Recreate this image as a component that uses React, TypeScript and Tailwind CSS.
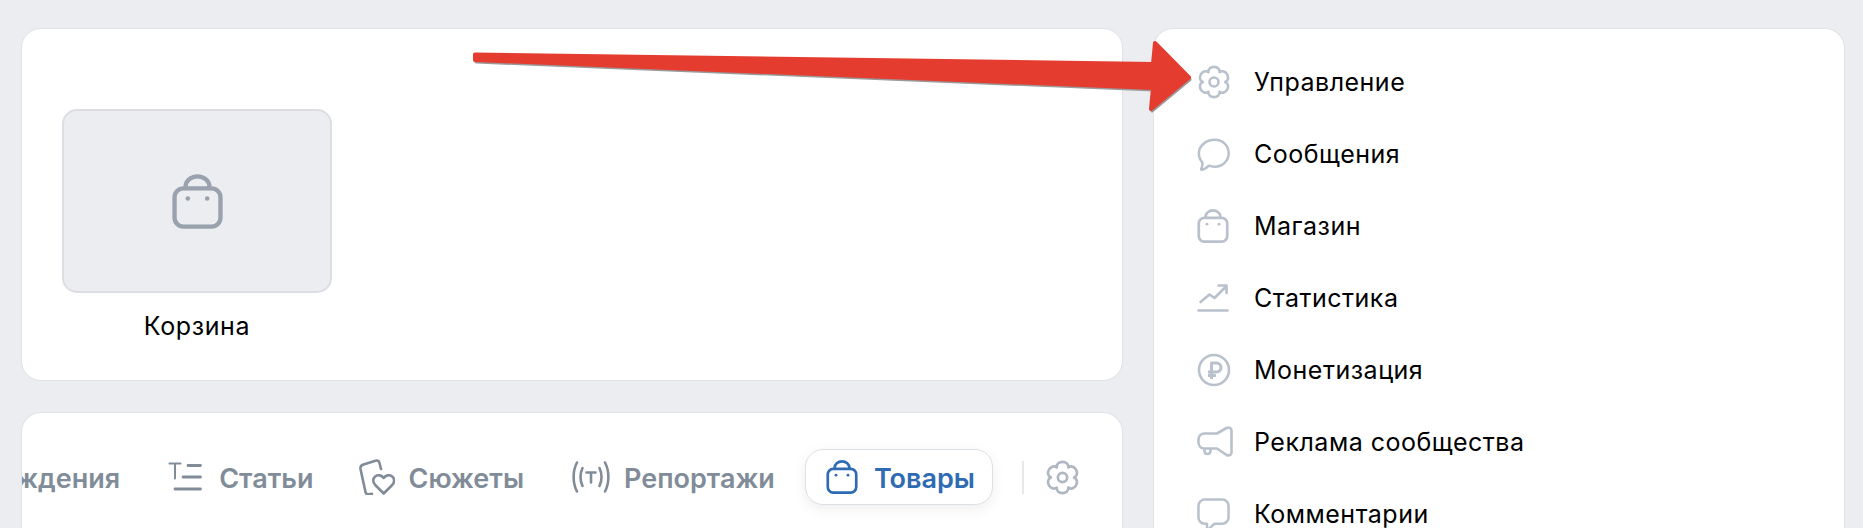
import type { ReactNode } from "react";

function BagIcon({ className }: { className: string }) {
  return (
    <svg className={className} viewBox="0 0 20 21.5" fill="none" stroke="currentColor" strokeWidth="1.7">
      <rect x="1" y="5.6" width="18" height="15" rx="3.5" />
      <path d="M5.300 5.600V5a4.700 4.100 0 0 1 9.400 0v.6" />
      <circle cx="6.200" cy="9.600" r="0.900" fill="currentColor" stroke="none" />
      <circle cx="13.800" cy="9.600" r="0.900" fill="currentColor" stroke="none" />
    </svg>
  );
}

// six rounded lobes around the centre
function gearPath() {
  const polar = (deg: number, r: number) => {
    const rad = (deg * Math.PI) / 180;
    return `${(17 + r * Math.cos(rad)).toFixed(2)} ${(17 + r * Math.sin(rad)).toFixed(2)}`;
  };
  let d = `M${polar(-120, 11.2)}`;
  for (let a = -90; a < 270; a += 60) {
    d += `C${polar(a - 21, 18.2)} ${polar(a + 21, 18.2)} ${polar(a + 30, 11.2)}`;
  }
  return d + "z";
}

function GearIcon({ className }: { className: string }) {
  return (
    <svg className={className} viewBox="0 0 34 34" fill="none" stroke="currentColor" strokeWidth="2.600" strokeLinejoin="round">
      <path d={gearPath()} />
      <circle cx="17" cy="17" r="4.500" />
    </svg>
  );
}

function BubbleIcon({ className }: { className: string }) {
  return (
    <svg className={className} viewBox="0 0 32 32" fill="none" stroke="currentColor" strokeWidth="2.400" strokeLinejoin="round">
      <path d="M17 1.800C25 1.800 30.700 7.400 30.700 14.800S25 27.800 17 27.800c-2 0-3.800-.3-5.500-1-1.500 1.800-4 3.500-6.500 4-.9.200-1.300-.5-.9-1.200.9-1.500 1.300-3.500 1.200-5.800C3 21.300 1.800 18.300 1.800 14.800 1.800 7.400 9 1.800 17 1.800z" />
    </svg>
  );
}

function ChartIcon({ className }: { className: string }) {
  return (
    <svg className={className} viewBox="0 0 32 28" fill="none" stroke="currentColor" strokeWidth="2.600" strokeLinecap="round" strokeLinejoin="round">
      <path d="M1.500 26.500h29" />
      <path d="M3.500 18l9-7.500 5 3.500L29 2.500" />
      <path d="M21.500 1.500h8v7.500" />
    </svg>
  );
}

function RubleIcon({ className }: { className: string }) {
  return (
    <svg className={className} viewBox="0 0 34 34" fill="none" stroke="currentColor" strokeWidth="2.600">
      <circle cx="17" cy="17" r="15" />
      <path d="M14.500 26V10h5a4 4 0 0 1 0 9H11M11 22.500h8" strokeWidth="3" strokeLinejoin="round" />
    </svg>
  );
}

function MegaphoneIcon({ className }: { className: string }) {
  return (
    <svg className={className} viewBox="0 0 36 32" fill="none" stroke="currentColor" strokeWidth="2.600" strokeLinejoin="round">
      <path d="M7 7.500H20L29.500 2C32 .8 34.500 2 34.500 4.500V26.500C34.500 29 32 30 29.500 29L20 22.500H7C-.5 22.500-.5 7.500 7 7.500z" />
      <path d="M7.500 22.500v2.500c0 4 6 4 6 0v-2.500" />
    </svg>
  );
}

function CommentIcon({ className }: { className: string }) {
  return (
    <svg className={className} viewBox="0 0 34 34" fill="none" stroke="currentColor" strokeWidth="2.600" strokeLinejoin="round">
      <path d="M8 1.500h18A6.500 6.500 0 0 1 32.500 8v12a6.500 6.500 0 0 1-6.500 6.500H18l-6 5.500c-.8.600-1.700.200-1.700-.8v-4.700H8A6.500 6.500 0 0 1 1.500 20V8A6.500 6.500 0 0 1 8 1.500z" />
    </svg>
  );
}

function ArticleIcon({ className }: { className: string }) {
  return (
    <svg className={className} viewBox="0 0 34 30" fill="none" stroke="currentColor" strokeWidth="2.800" strokeLinecap="round">
      <path d="M1.500 1.500h11M7 1.500v15" strokeWidth="2" />
      <path d="M20 3.500h12.500M15 15h17.500M7 27h25.500" />
    </svg>
  );
}

function StoryIcon({ className }: { className: string }) {
  return (
    <svg className={className} viewBox="0 0 36 36" fill="none" stroke="currentColor" strokeWidth="2.600" strokeLinecap="round" strokeLinejoin="round">
      <path d="M13 34.800l-3.500.5c-1.500.2-2.700-.7-3-2.200L1.500 10c-.3-2 .8-3.800 3-4.500L16.500 1.700c1.800-.5 3.500.5 4 2.300l1.500 6" />
      <path d="M24.700 34.500l-8.500-8.500c-2.700-3-2.500-6.500 0-8.500 2.700-2 6.500-1.500 8.500 1.500 2-3 5.800-3.500 8.500-1.500 2.500 2 2.700 5.500 0 8.500z" />
    </svg>
  );
}

function LiveIcon({ className }: { className: string }) {
  return (
    <svg className={className} viewBox="0 0 38 32" fill="none" stroke="currentColor" strokeWidth="2.600" strokeLinecap="round">
      <path d="M5 1.500c-4.500 8.500-4.500 20.500 0 29M33 1.500c4.500 8.500 4.500 20.500 0 29" />
      <path d="M10.500 7c-2.500 5.500-2.500 12.500 0 18M27.500 7c2.500 5.500 2.500 12.500 0 18" />
      <path d="M14.500 11.500h9M19 11.500v10" />
    </svg>
  );
}

function Tab({ icon, label }: { icon: ReactNode; label: string }) {
  return (
    <div className="flex shrink-0 items-center gap-[14px] px-[20px] text-[#818c99]">
      {icon}
      <span className="whitespace-nowrap pt-[3px]">{label}</span>
    </div>
  );
}

const menu = [
  { label: "Управление", icon: <GearIcon className="h-[34px] w-[34px]" /> },
  { label: "Сообщения", icon: <BubbleIcon className="h-[33px] w-[33px]" /> },
  { label: "Магазин", icon: <BagIcon className="h-[34px] w-[32px]" /> },
  { label: "Статистика", icon: <ChartIcon className="h-[28px] w-[32px]" /> },
  { label: "Монетизация", icon: <RubleIcon className="h-[34px] w-[34px]" /> },
  { label: "Реклама сообщества", icon: <MegaphoneIcon className="h-[32px] w-[36px]" /> },
  { label: "Комментарии", icon: <CommentIcon className="h-[33px] w-[33px]" /> },
];

export default function App() {
  return (
    <main className="relative flex h-[528px] gap-[30px] overflow-hidden bg-[#ecedf0] pl-[21px] pr-[18px] pt-[28px] font-[Inter,sans-serif] text-black">
      <div className="flex w-[1102px] shrink-0 flex-col gap-[31px]">
        {/* Shop block */}
        <section className="h-[353px] shrink-0 rounded-[20px] border border-[#dfe2e6] bg-white pl-[40px] pt-[80px]">
          <div className="flex w-[270px] flex-col items-center">
            <div className="flex h-[184px] w-[270px] items-center justify-center rounded-[15px] border-2 border-[#dcdee3] bg-[#ebedf0] text-[#99a2ad]">
              <BagIcon className="h-[55px] w-[51px]" />
            </div>
            <div className="mt-[18px] text-[25px] leading-[30px] tracking-[0.6px]">Корзина</div>
          </div>
        </section>

        {/* Tabs */}
        <section className="flex-1 overflow-hidden rounded-t-[20px] border border-b-0 border-[#dfe2e6] bg-white pt-[36px]">
          <div className="flex items-center justify-end pr-[42px] text-[27px] font-semibold leading-[32px]">
            <Tab icon={null} label="Дни рождения" />
            <div className="w-[8px] shrink-0" />
            <Tab icon={<ArticleIcon className="mr-[3px] h-[30px] w-[34px]" />} label="Статьи" />
            <div className="w-[5px] shrink-0" />
            <Tab icon={<StoryIcon className="h-[36px] w-[36px]" />} label="Сюжеты" />
            <div className="w-[8px] shrink-0" />
            <Tab icon={<LiveIcon className="h-[32px] w-[38px]" />} label="Репортажи" />
            <div className="w-[10px] shrink-0" />
            <div className="flex h-[56px] shrink-0 items-center gap-[16px] rounded-[18px] border border-[#dce1e6] bg-white pl-[20px] pr-[17px] text-[#2f6bb3] shadow-[0_4px_14px_rgba(0,0,0,0.07)]">
              <BagIcon className="h-[34px] w-[32px]" />
              <span className="pt-[3px]">Товары</span>
            </div>
            <div className="ml-[29px] mr-[21px] h-[33px] w-[2px] shrink-0 bg-[#e7e8ec]" />
            <GearIcon className="h-[35px] w-[35px] shrink-0 text-[#aeb7c2]" />
          </div>
        </section>
      </div>

      {/* Sidebar menu */}
      <aside className="flex-1 rounded-t-[20px] border border-b-0 border-[#dfe2e6] bg-white pl-[43px] pt-[17px]">
        {menu.map((item) => (
          <div key={item.label} className="flex h-[72px] items-center text-[25px] tracking-[0.5px]">
            <div className="flex w-[57px] shrink-0 items-center text-[#b8c1cc]">{item.icon}</div>
            <span className="whitespace-nowrap pt-[2px]">{item.label}</span>
          </div>
        ))}
      </aside>

      {/* Annotation arrow over the screenshot */}
      <svg className="pointer-events-none absolute left-0 top-0" width="1863" height="528" fill="none">
        <path d="M475 54.500L1153 64 1155 43 1189 77.500 1151 109 1153 88 475 60z" transform="translate(1 2)" fill="#9a9a9a" stroke="#9a9a9a" strokeWidth="3" strokeLinejoin="round" />
        <path d="M475 54.500L1153 64 1155 43 1189 77.500 1151 109 1153 88 475 60z" fill="#e53c30" stroke="#e53c30" strokeWidth="4" strokeLinejoin="round" />
      </svg>
    </main>
  );
}
